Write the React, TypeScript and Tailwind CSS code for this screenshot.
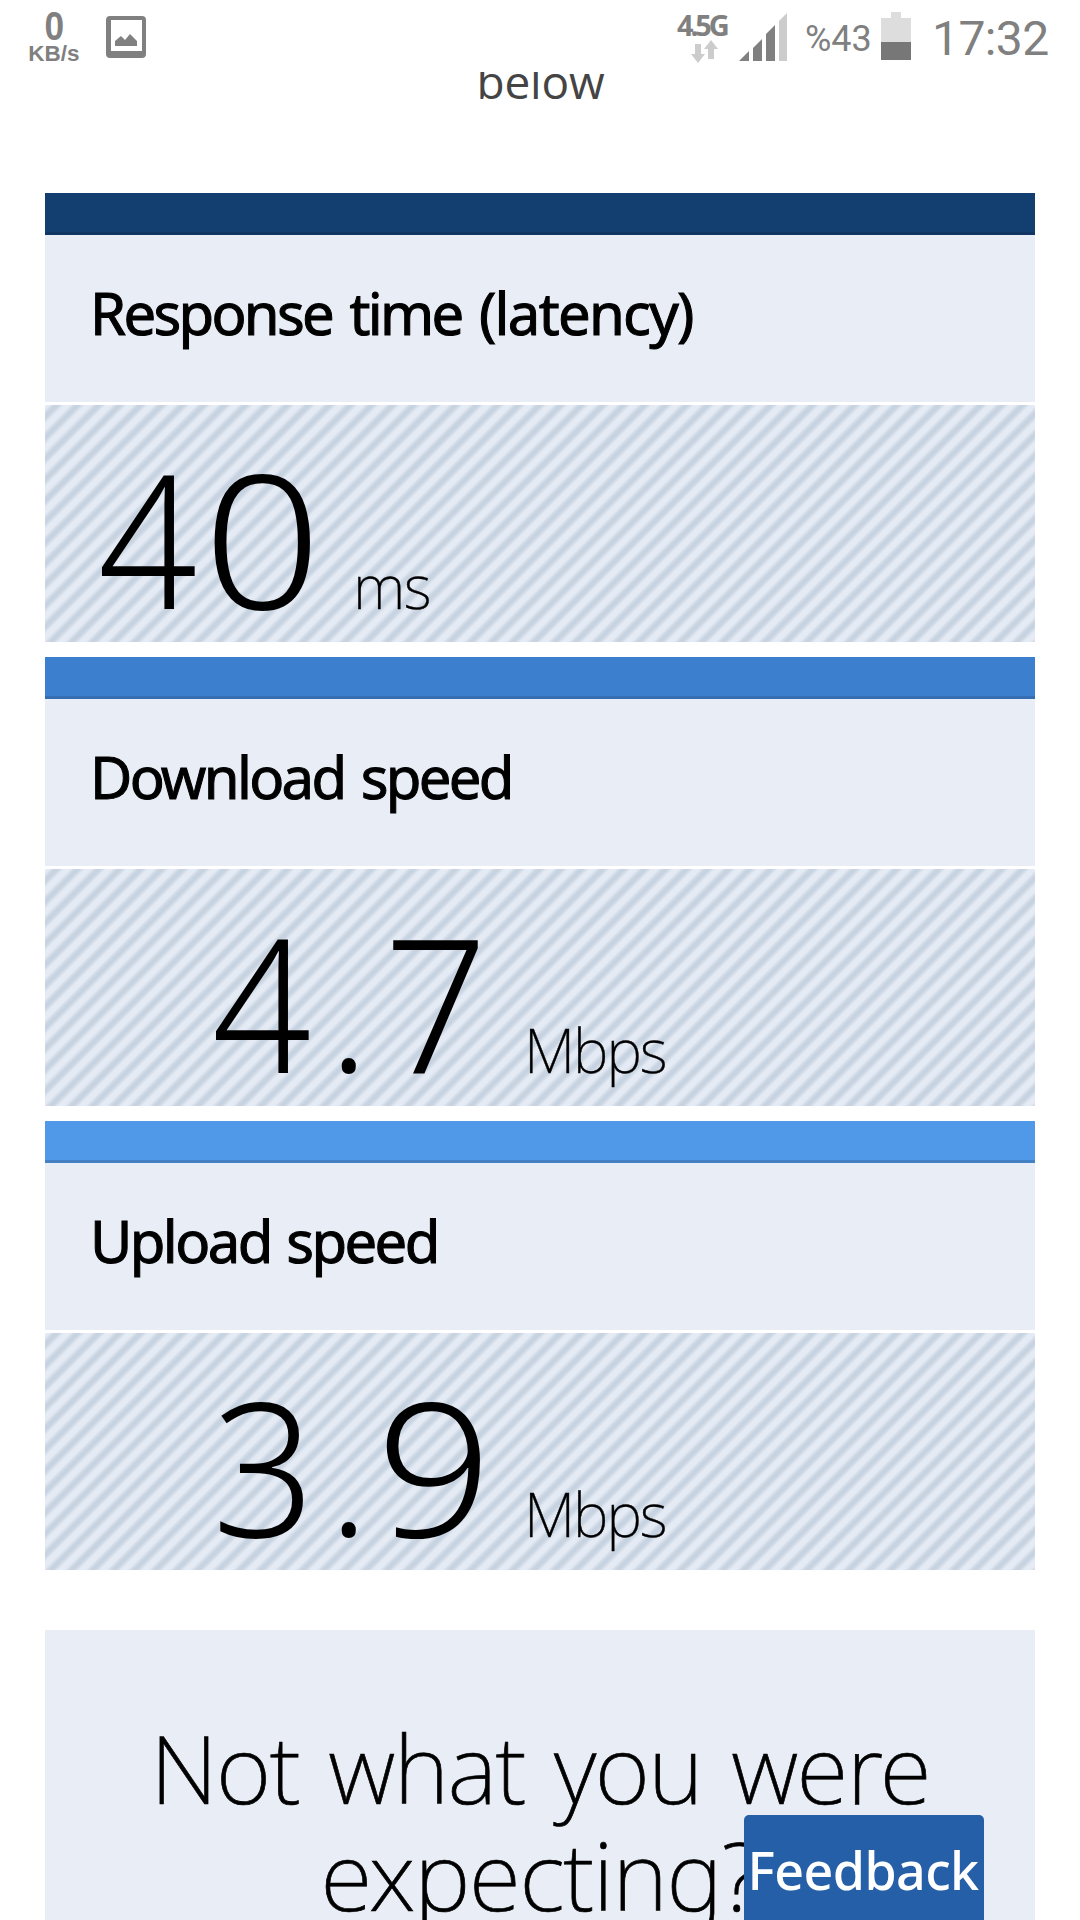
type Reading = {
  title: string
  note?: string
  titleCls: string
  glyphs: { ch: string; cls: string }[]
  unit: string
  bar: string
  pad: string
  unitGap: string
}

const readings: Reading[] = [
  {
    title: 'Response time ',
    note: '(latency)',
    titleCls: 'tracking-[-2.7px] [word-spacing:5px]',
    glyphs: [
      { ch: '4', cls: 'w-[105px] scale-x-[0.93]' },
      { ch: '0', cls: 'w-[116px] scale-x-[1.11]' },
    ],
    unit: 'ms',
    bar: 'bg-[#133f70] border-[#123663]',
    pad: 'pl-[53px]',
    unitGap: 'ml-[34px] tracking-[-1.4px]',
  },
  {
    title: 'Download speed',
    titleCls: 'tracking-[-2.7px] [word-spacing:4px]',
    glyphs: [
      { ch: '4', cls: 'w-[117px] scale-x-[0.93]' },
      { ch: '.', cls: 'w-[55px] scale-[0.86]' },
      { ch: '7', cls: 'w-[107px] scale-x-[0.97]' },
    ],
    unit: 'Mbps',
    bar: 'bg-[#3c7fce] border-[#366eb3]',
    pad: 'pl-[167px]',
    unitGap: 'ml-[33px] tracking-[-2px]',
  },
  {
    title: 'Upload speed',
    titleCls: 'tracking-[-2.6px] [word-spacing:3px]',
    glyphs: [
      { ch: '3', cls: 'w-[117px] scale-x-[0.965]' },
      { ch: '.', cls: 'w-[47px] scale-[0.86]' },
      { ch: '9', cls: 'w-[115px] scale-x-[1.09]' },
    ],
    unit: 'Mbps',
    bar: 'bg-[#5098e8] border-[#4480c4]',
    pad: 'pl-[167px]',
    unitGap: 'ml-[33px] tracking-[-2px]',
  },
]

function StatusBar() {
  return (
    <header className="flex h-[72px] items-start bg-white font-['Roboto',sans-serif] text-[#808080]">
      <div className="ml-[28px] flex w-[52px] flex-col items-center font-['Liberation_Sans',sans-serif] font-bold">
        <span className="mt-[6px] scale-x-[0.86] text-[41px] leading-[40px]">0</span>
        <span className="text-[22.5px] leading-[16px]">KB/s</span>
      </div>
      <svg className="ml-[26px] mt-[16px]" width="40" height="42" viewBox="0 0 40 42">
        <path fill="#808080" fillRule="evenodd" d="M4 0h32q4 0 4 4v34q0 4-4 4H4q-4 0-4-4V4q0-4 4-4zM5 4v31h31V4z" />
        <path fill="#808080" d="M9 30v-5l6-5 4 4 5-6 7 7v5z" />
      </svg>
      <div className="ml-[531px] flex w-[52px] flex-col">
        <span className="mt-[10px] font-['Noto_Sans',sans-serif] text-[29px] font-bold leading-[30px] tracking-[-3.2px]">4.5G</span>
        <svg className="ml-[14px]" width="27" height="24" viewBox="0 0 27 24">
          <path fill="#ccc" d="M4 4h6v10h4l-7 9-7-9h4zM17 19h6V9h4l-7-9-7 9h4z" />
        </svg>
      </div>
      <svg className="ml-[10px] mt-[13px]" width="48" height="48" viewBox="0 0 48 48">
        <path fill="#808080" d="M0 48 10 38v10zM14 48V35l9-9v22zM27 48V21l9-9v36z" />
        <path fill="#ccc" d="M40 48V8l8-8v48z" />
      </svg>
      <span className="ml-[18px] mt-[18px] w-[68px] text-[36px] leading-[42px]">%43</span>
      <svg className="ml-[8px] mt-[12px]" width="30" height="48" viewBox="0 0 30 48">
        <path fill="#ddd" d="M10 0h10v6h10v24H0V6h10z" />
        <path fill="#777" d="M0 30h30v18H0z" />
      </svg>
      <span className="ml-[21px] mt-[11px] text-[48px] leading-[56px] tracking-[-0.6px]">17:32</span>
    </header>
  )
}

function Card({ r }: { r: Reading }) {
  return (
    <section>
      <div className={`h-[42px] border-b-[3px] ${r.bar}`} />
      <h2 className={`h-[167px] bg-[#e9eef6] pl-[45px] text-[58px] font-normal leading-[155px] [-webkit-text-stroke:1px_black] ${r.titleCls}`}>
        {r.title}
        {r.note && <span className="tracking-[-1.7px]">{r.note}</span>}
      </h2>
      <div
        className={`mt-[3px] flex h-[237px] items-baseline bg-[repeating-linear-gradient(135deg,#e5ebf4_0px,#e5ebf4_2.8px,#c7d3e1_6.9px,#c7d3e1_9.7px,#e5ebf4_13.6px,#e5ebf4_14.85px)] pt-[38px] ${r.pad}`}
      >
        {r.glyphs.map((g, i) => (
          <span key={i} className={`inline-block shrink-0 origin-[0_160px] text-[187px] font-light leading-none ${g.cls}`}>
            {g.ch}
          </span>
        ))}
        <span className={`text-[60px] font-extralight leading-none [-webkit-text-stroke:0.4px_black] ${r.unitGap}`}>{r.unit}</span>
      </div>
    </section>
  )
}

export default function App() {
  return (
    <div className="relative h-[1920px] w-[1080px] overflow-hidden bg-white font-['Noto_Sans',sans-serif] text-black">
      <StatusBar />
      <div className="flex h-[121px] items-start justify-center overflow-hidden">
        <p className="-mt-[23px] ml-[1px] font-['Open_Sans',sans-serif] text-[46px] leading-[64px] tracking-[-0.2px] text-[#444]">below</p>
      </div>
      <main className="mx-[45px]">
        <div className="flex flex-col gap-[15px]">
          {readings.map((r) => (
            <Card key={r.title} r={r} />
          ))}
        </div>
        <section className="mt-[60px] h-[290px] overflow-hidden bg-[#e9eef6] pt-[84px] text-center text-[95px] font-extralight leading-[107px] [-webkit-text-stroke:0.7px_black]">
          <p className="tracking-[-1.6px] [word-spacing:6px]">Not what you were</p>
          <p className="tracking-[-1.3px]">expecting?</p>
        </section>
      </main>
      <button className="absolute left-[744px] top-[1815px] h-[110px] w-[240px] whitespace-nowrap rounded-t-[5px] bg-[#255fa7] pr-[2px] text-[52px] font-medium leading-[106px] tracking-[-0.6px] text-white">
        Feedback
      </button>
    </div>
  )
}
